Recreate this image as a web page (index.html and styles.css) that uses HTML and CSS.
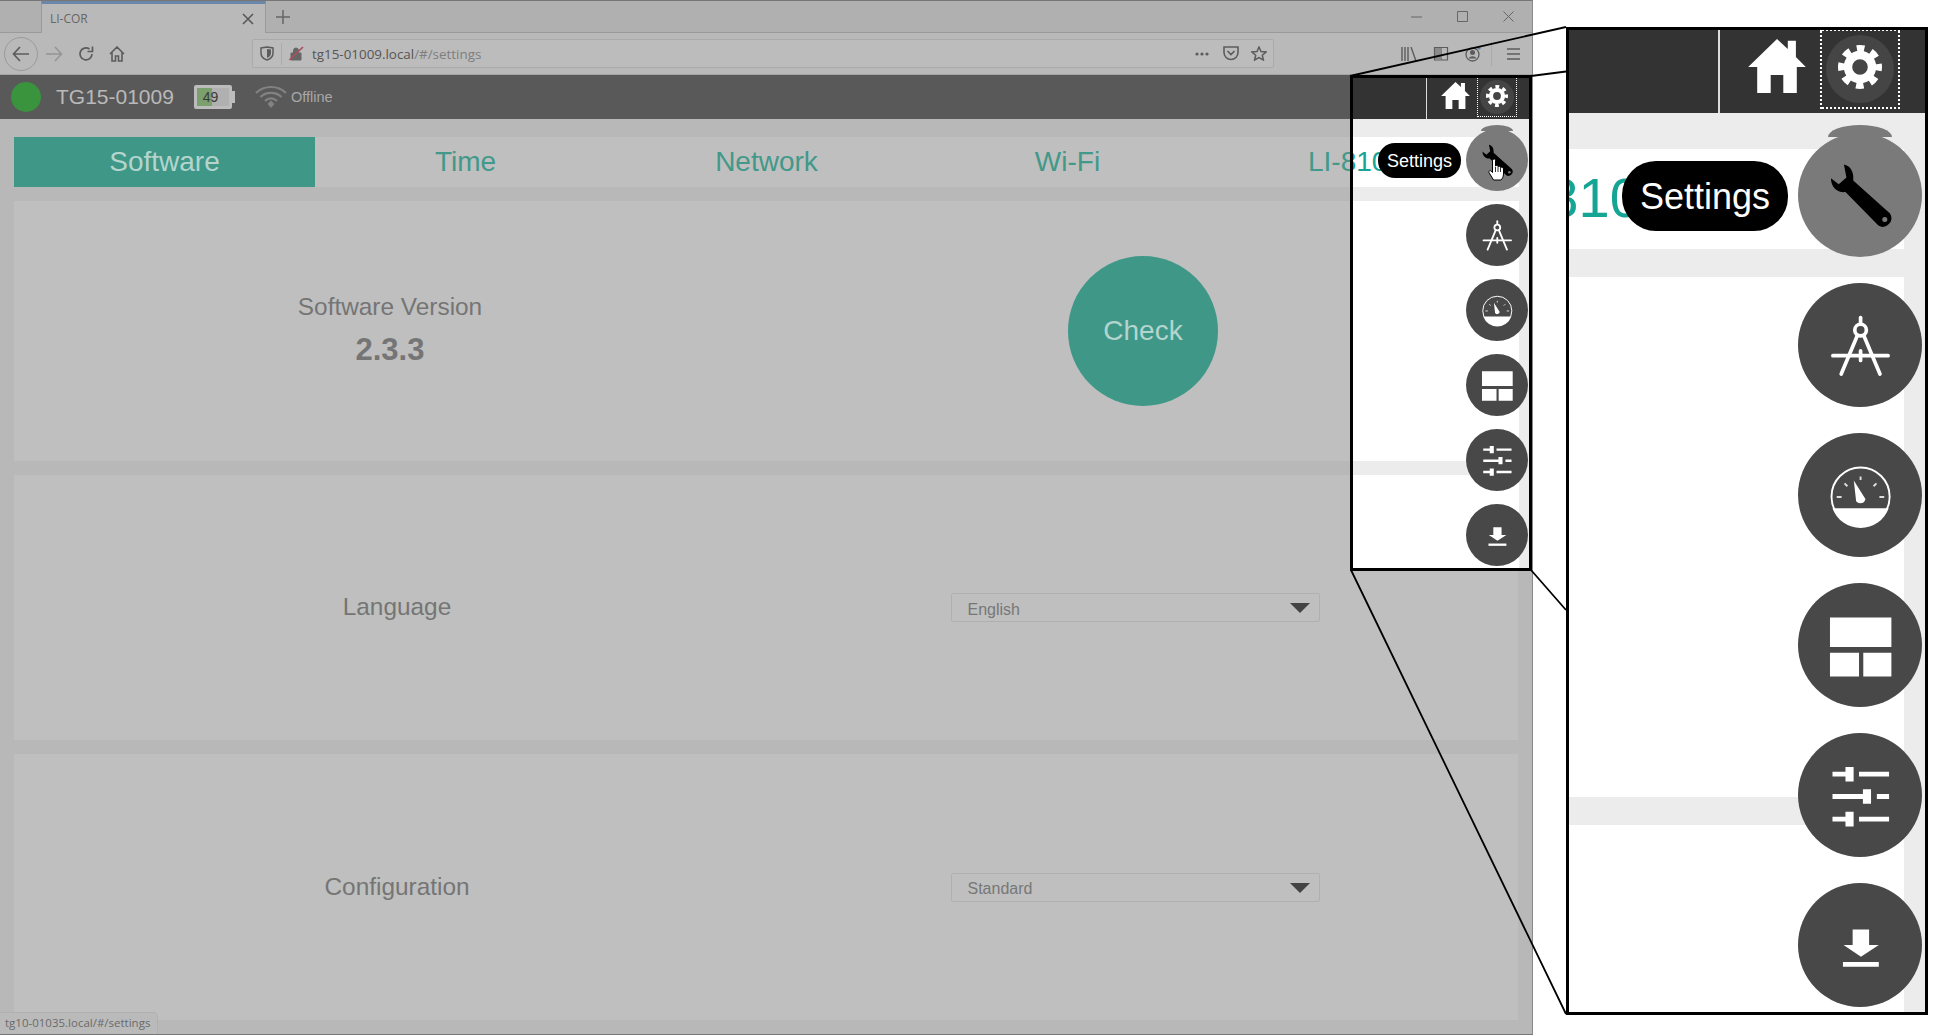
FILE: index.html
```html
<!DOCTYPE html>
<html lang="en">
<head>
  <meta charset="UTF-8" />
  <title>LI-COR</title>
  <link rel="stylesheet" href="styles.css">
</head>
<body>
  <svg class="sprite" width="0" height="0">
    <symbol id="i-home" viewBox="0 0 32 30">
      <path d="M16 0 L22 5.500 V1 H26.500 V10 L32 15.500 H27 V30 H19.500 V20 H12.500 V30 H5 V15.500 H0 Z" fill="currentColor"/>
    </symbol>
    <symbol id="i-gear" viewBox="0 0 24 24">
      <circle cx="12" cy="12" r="6" fill="none" stroke="currentColor" stroke-width="4.200"/>
      <circle cx="12" cy="12" r="9.300" fill="none" stroke="currentColor" stroke-width="3.400" stroke-dasharray="3.800 3.505" stroke-dashoffset="1.900"/>
    </symbol>
    <symbol id="i-wrench" viewBox="0 0 64 64">
      <path d="M23.700 16.300 C27 17 29 20 28.500 24.500 L47.500 41.500 A4.500 4.500 0 0 1 41.500 47.800 L24.500 30.500 C20.500 31 17 28 17 23.300 L21 26.500 L25 23 Z" fill="#000"/>
      <circle cx="44.800" cy="44.600" r="1.300" fill="#7a7a7a"/>
    </symbol>
    <symbol id="i-compass" viewBox="0 0 64 64">
      <g fill="none" stroke="#fff" stroke-width="1.900" stroke-linecap="round">
        <path d="M32.300 17.800 V20.500"/>
        <circle cx="32.300" cy="24.300" r="3"/>
        <path d="M30.700 27 L22.300 47 M33.900 27 L42.300 47"/>
        <path d="M18 37.500 H46.500 M32.300 35 V40"/>
      </g>
    </symbol>
    <symbol id="i-gauge" viewBox="0 0 64 64">
      <circle cx="32.300" cy="32.800" r="15" fill="none" stroke="#fff" stroke-width="1"/>
      <path d="M17.800 38.800 H46.800 A15.400 15.400 0 0 1 17.800 38.800 Z" fill="#fff"/>
      <path d="M28.800 24.500 L34.800 34 A2.700 2.700 0 0 1 30 35.200 Z" fill="#fff"/>
      <path d="M20 33 H22.500 M24 26 L25.500 27.500 M32.300 22.500 V24.300 M40.500 26 L39 27.500 M44.500 33 H42" stroke="#ddd" stroke-width="1" fill="none"/>
    </symbol>
    <symbol id="i-layout" viewBox="0 0 64 64">
      <path d="M16.500 17.800 H48.200 V33 H16.500 Z M16.500 36 H31.500 V48.200 H16.500 Z M33.700 36 H48.200 V48.200 H33.700 Z" fill="#fff"/>
    </symbol>
    <symbol id="i-sliders" viewBox="0 0 64 64">
      <path d="M17.800 20 H24.500 V17.500 H28.700 V25 H24.500 V22.500 H17.800 Z M31.500 20 H47 V22.500 H31.500 Z" fill="#fff"/>
      <path d="M17.800 31.500 H33.500 V29 H37.700 V36.500 H33.500 V34 H17.800 Z M40.700 31.500 H47 V34 H40.700 Z" fill="#fff"/>
      <path d="M17.800 43.200 H24.500 V40.700 H28.700 V48.200 H24.500 V45.700 H17.800 Z M31.500 43.200 H47 V45.700 H31.500 Z" fill="#fff"/>
    </symbol>
    <symbol id="i-download" viewBox="0 0 64 64">
      <path d="M28.200 24 H36.700 V32 H41.700 L32.500 38 L23.500 32 H28.200 Z" fill="#fff"/>
      <path d="M23.200 40.800 H41.700 V43.200 H23.200 Z" fill="#fff"/>
    </symbol>
  </svg>

  <div class="browser">
    <div class="tabstrip">
      <div class="tab">
        <span class="tab-title">LI-COR</span>
        <svg class="tab-close" width="12" height="12" viewBox="0 0 12 12"><path d="M1 1 L11 11 M11 1 L1 11" stroke="#555" stroke-width="1.500"/></svg>
      </div>
      <svg class="tab-new" width="14" height="14" viewBox="0 0 14 14"><path d="M7 0 V14 M0 7 H14" stroke="#666" stroke-width="1.500"/></svg>
      <div class="winctl">
        <svg width="12" height="12" viewBox="0 0 12 12"><path d="M0 6 H11" stroke="#666" stroke-width="1"/></svg>
        <svg width="12" height="12" viewBox="0 0 12 12"><path d="M.5 .5 H10.500 V10.500 H.5 Z" stroke="#666" fill="none"/></svg>
        <svg width="12" height="12" viewBox="0 0 12 12"><path d="M.5 .5 L10.500 10.500 M10.500 .5 L.5 10.500" stroke="#666"/></svg>
      </div>
    </div>

    <div class="toolbar">
      <span class="nav-back">
        <svg width="18" height="16" viewBox="0 0 18 16"><path d="M8 1 L1.500 8 L8 15 M2 8 H17" stroke="#5c5c5c" stroke-width="1.700" fill="none"/></svg>
      </span>
      <svg class="nav-icon" width="18" height="16" viewBox="0 0 18 16"><path d="M10 1 L16.500 8 L10 15 M16 8 H1" stroke="#949494" stroke-width="1.500" fill="none"/></svg>
      <svg class="nav-icon" width="16" height="16" viewBox="0 0 16 16"><path d="M14 8 A6 6 0 1 1 11.500 3 M14.500 .5 V5.500 H9.500" stroke="#5c5c5c" stroke-width="1.700" fill="none"/></svg>
      <svg class="nav-icon" width="16" height="16" viewBox="0 0 16 16"><path d="M1 8 L8 1 L15 8 M3 6.500 V15 H6.500 V10 H9.500 V15 H13 V6.500" stroke="#5c5c5c" stroke-width="1.600" fill="none"/></svg>

      <div class="urlbar">
        <svg width="14" height="15" viewBox="0 0 14 15"><path d="M1 2 L7 1 L13 2 V7 C13 11 10 13 7 14 C4 13 1 11 1 7 Z" stroke="#5c5c5c" stroke-width="1.500" fill="none"/><path d="M7 3 V12 C9 11 11 10 11 6.500 V3.500 Z" fill="#5c5c5c"/></svg>
        <span class="url-sep"></span>
        <svg width="15" height="15" viewBox="0 0 15 15"><path d="M2 7 H12 V14 H2 Z M4.500 7 V4.500 A2.500 2.500 0 0 1 9.500 4.500 V7" fill="#666" stroke="#666"/><path d="M.5 14 L14 1" stroke="#a85060" stroke-width="1.700"/></svg>
        <span class="url-text">tg15-01009.local<span class="url-path">/#/settings</span></span>
        <svg class="url-dots" width="14" height="4" viewBox="0 0 14 4"><circle cx="2" cy="2" r="1.600" fill="#5c5c5c"/><circle cx="7" cy="2" r="1.600" fill="#5c5c5c"/><circle cx="12" cy="2" r="1.600" fill="#5c5c5c"/></svg>
        <svg class="url-pocket" width="16" height="15" viewBox="0 0 16 15"><path d="M1 1 H15 V6.500 A7 7 0 0 1 1 6.500 Z M4.500 5 L8 8.500 L11.500 5" stroke="#5c5c5c" stroke-width="1.600" fill="none"/></svg>
        <svg width="16" height="15" viewBox="0 0 16 15"><path d="M8 1 L10 5.500 L15 6 L11.300 9.200 L12.400 14 L8 11.500 L3.600 14 L4.700 9.200 L1 6 L6 5.500 Z" stroke="#5c5c5c" stroke-width="1.500" fill="none"/></svg>
      </div>

      <div class="tools">
        <svg width="16" height="14" viewBox="0 0 16 14"><path d="M1 0 V14 M4 0 V14 M7 0 V14 M10 0 L15 14" stroke="#5c5c5c" stroke-width="1.400"/></svg>
        <svg width="16" height="14" viewBox="0 0 16 14"><path d="M1.500 .5 H14.500 V13 H1.500 Z M8 .5 V13" stroke="#5c5c5c" stroke-width="1.200" fill="none"/><path d="M2 1 H8 V13 H2 Z" fill="#8a8a8a"/></svg>
        <svg width="16" height="16" viewBox="0 0 16 16"><circle cx="7.500" cy="8.500" r="6.500" stroke="#5c5c5c" stroke-width="1.300" fill="none"/><circle cx="7.500" cy="6.500" r="2.500" fill="#5c5c5c"/><path d="M3.500 12.500 C5 9.500 10 9.500 11.500 12.500" fill="#5c5c5c"/><circle cx="14" cy="2" r="1.700" fill="#5f84a8"/></svg>
        <span class="tools-sep"></span>
        <svg width="13" height="12" viewBox="0 0 13 12"><path d="M0 1 H13 M0 6 H13 M0 11 H13" stroke="#5c5c5c" stroke-width="1.500"/></svg>
      </div>
    </div>

    <header class="app-header">
      <span class="status-dot"></span>
      <span class="device-name">TG15-01009</span>
      <span class="battery"><span class="battery-fill"></span><span class="battery-num">49</span></span>
      <svg class="wifi" width="32" height="24" viewBox="0 0 32 24"><path d="M1 8 C9 0 23 0 31 8 M5.500 12 C11 6.500 21 6.500 26.500 12 M10 16 C13.500 12.500 18.500 12.500 22 16" stroke="#828282" stroke-width="2.200" fill="none"/><path d="M12.500 19 L16 15.500 L19.500 19 L16 23 Z" fill="#828282"/></svg>
      <span class="offline">Offline</span>
    </header>

    <main class="settings">
      <nav class="tabs">
        <a class="tabs-item is-active">Software</a>
        <a class="tabs-item">Time</a>
        <a class="tabs-item">Network</a>
        <a class="tabs-item">Wi-Fi</a>
        <a class="tabs-item tabs-item-last">LI-810</a>
      </nav>

      <section class="card card-version">
        <div class="card-left card-left-version">
          <div class="card-label">Software Version</div>
          <div class="version">2.3.3</div>
        </div>
        <div class="card-right card-right-version">
          <button class="check-btn">Check</button>
        </div>
      </section>

      <section class="card card-language">
        <div class="card-left"><div class="card-label">Language</div></div>
        <div class="card-right">
          <div class="picker"><span>English</span><i class="picker-arrow"></i></div>
        </div>
      </section>

      <section class="card card-config">
        <div class="card-left card-left-config"><div class="card-label">Configuration</div></div>
        <div class="card-right">
          <div class="picker"><span>Standard</span><i class="picker-arrow"></i></div>
        </div>
      </section>
    </main>

    <div class="statusbar">tg10-01035.local/#/settings</div>
  </div>

  <!-- callout lines from the small frame to the enlarged one -->
  <svg class="connectors" width="1937" height="1035" viewBox="0 0 1937 1035">
    <path d="M1350 76 L1566 27 M1531 76 L1566 71.500 M1351 570 L1566 1014 M1531 570 L1566 610" stroke="#000" stroke-width="1.800" fill="none"/>
  </svg>

  <div class="lens lens-small">
    <div class="lens-view">
      <div class="lens-header">
        <span class="lens-brand"></span>
        <svg class="lens-home"><use href="#i-home"/></svg>
        <span class="lens-gear"><span class="lens-gear-disc"><svg><use href="#i-gear"/></svg></span></span>
      </div>
      <div class="lens-body">
        <div class="lens-tabs"><span>LI-810</span></div>
        <div class="lens-card lens-card-a"></div>
        <div class="lens-card lens-card-b"></div>
      </div>
      <span class="lens-tip">Settings</span>
      <div class="fabs">
        <span class="fab fab-hover"><svg><use href="#i-wrench"/></svg></span>
        <span class="fab"><svg><use href="#i-compass"/></svg></span>
        <span class="fab"><svg><use href="#i-gauge"/></svg></span>
        <span class="fab"><svg><use href="#i-layout"/></svg></span>
        <span class="fab"><svg><use href="#i-sliders"/></svg></span>
        <span class="fab"><svg><use href="#i-download"/></svg></span>
      </div>
      <svg class="hand" width="17" height="23" viewBox="0 0 17 23">
        <path d="M5 1.500 C6 .5 7.500 1 7.500 2.500 V8 C8.500 7 10 7.500 10 8.500 C11 8 12.500 8.500 12.500 9.500 C13.500 9 15.500 9.500 15.500 11 V16 C15.500 19 14 21 13 22 H5.500 L1 14.500 C.5 13 2 12 3.200 13 L4.500 14.500 V2.500 Z" fill="#fff" stroke="#000" stroke-width="1"/>
        <path d="M7.500 9 V14 M10 9 V14 M12.500 10 V14" stroke="#000" stroke-width=".8"/>
      </svg>
    </div>
  </div>

  <div class="lens lens-big">
    <div class="lens-view">
      <div class="lens-header">
        <span class="lens-brand"></span>
        <svg class="lens-home"><use href="#i-home"/></svg>
        <span class="lens-gear"><span class="lens-gear-disc"><svg><use href="#i-gear"/></svg></span></span>
      </div>
      <div class="lens-body">
        <div class="lens-tabs"><span>LI-810</span></div>
        <div class="lens-card lens-card-a"></div>
        <div class="lens-card lens-card-b"></div>
      </div>
      <span class="lens-tip">Settings</span>
      <div class="fabs">
        <span class="fab fab-hover"><svg><use href="#i-wrench"/></svg></span>
        <span class="fab"><svg><use href="#i-compass"/></svg></span>
        <span class="fab"><svg><use href="#i-gauge"/></svg></span>
        <span class="fab"><svg><use href="#i-layout"/></svg></span>
        <span class="fab"><svg><use href="#i-sliders"/></svg></span>
        <span class="fab"><svg><use href="#i-download"/></svg></span>
      </div>
    </div>
  </div>
</body>
</html>
```

FILE: styles.css
```css
html, body {
  margin: 0;
  height: 100%;
}

body {
  position: relative;
  width: 1937px;
  height: 1035px;
  overflow: hidden;
  background: #fff;
  font-family: 'Liberation Sans', Arial, sans-serif;
}

.sprite {
  position: absolute;
}

/* browser window, dimmed */
.browser {
  position: relative;
  box-sizing: border-box;
  width: 1533px;
  height: 1035px;
  display: flex;
  flex-direction: column;
  border-top: 1px solid #777;
  border-right: 1px solid #8a8a8a;
  border-bottom: 1px solid #777;
  background: #b8b8b8;
}

.tabstrip {
  flex: none;
  height: 32px;
  display: flex;
  align-items: center;
  background: #b0b0b0;
  border-bottom: 1px solid #9a9a9a;
  box-sizing: border-box;
}

.tab {
  box-sizing: border-box;
  width: 225px;
  height: 32px;
  margin-left: 41px;
  padding: 0 11px 0 8px;
  display: flex;
  align-items: center;
  justify-content: space-between;
  background: #b9b9b9;
  border-top: 3px solid #6b86a8;
  border-left: 1px solid #9a9a9a;
  border-right: 1px solid #9a9a9a;
  align-self: flex-start;
}

.tab-title {
  font: 12px 'Open Sans', sans-serif;
  color: #666;
}

.tab-new {
  margin-left: 10px;
}

.winctl {
  margin-left: auto;
  margin-right: 17px;
  display: flex;
  gap: 34px;
}

.toolbar {
  flex: none;
  height: 41px;
  display: flex;
  align-items: center;
  background: #b9b9b9;
  border-bottom: 1px solid #a4a4a4;
  padding-left: 4px;
}

.nav-back {
  box-sizing: border-box;
  width: 34px;
  height: 34px;
  display: flex;
  align-items: center;
  justify-content: center;
  border: 1px solid #9a9a9a;
  border-radius: 50%;
  margin-right: 7px;
}

.nav-icon {
  margin-right: 15px;
}

.urlbar {
  box-sizing: border-box;
  width: 1022px;
  height: 29px;
  margin-left: 112px;
  padding: 0 6px 0 7px;
  display: flex;
  align-items: center;
  gap: 7px;
  background: #bcbcbc;
  border: 1px solid #aaa;
  border-radius: 2px;
}

.url-sep {
  width: 1px;
  height: 22px;
  background: #aaa;
}

.url-text {
  flex: 1;
  margin-left: 1px;
  font: 13.400px 'Open Sans', sans-serif;
  color: #555;
  white-space: nowrap;
}

.url-path {
  color: #7e7e7e;
}

.url-dots {
  margin-right: 7px;
}

.url-pocket {
  margin-right: 5px;
}

.tools {
  margin-left: auto;
  margin-right: 12px;
  display: flex;
  align-items: center;
  gap: 16px;
}

.tools-sep {
  width: 1px;
  height: 24px;
  margin: 0 -1px 0 -6px;
  background: #aaa;
}

.app-header {
  flex: none;
  height: 44px;
  display: flex;
  align-items: center;
  background: #595959;
  padding-left: 11px;
}

.status-dot {
  width: 30px;
  height: 30px;
  border-radius: 50%;
  background: #3a943e;
}

.device-name {
  margin-left: 15px;
  font-size: 21px;
  color: #b9b9b9;
}

.battery {
  position: relative;
  box-sizing: border-box;
  margin-left: 20px;
  width: 38px;
  height: 24px;
  border: 3px solid #bcbcbc;
  border-radius: 2px;
  background: #b0b0b0;
  display: flex;
  align-items: center;
  justify-content: center;
}

.battery::after {
  content: "";
  position: absolute;
  right: -6px;
  top: 3px;
  width: 3px;
  height: 12px;
  background: #bcbcbc;
}

.battery-fill {
  position: absolute;
  left: 0;
  top: 0;
  bottom: 0;
  width: 15px;
  background: #7c9f6e;
}

.battery-num {
  position: relative;
  margin-right: 5px;
  font-size: 14px;
  color: #3a3a3a;
}

.wifi {
  margin-left: 23px;
}

.offline {
  margin-left: 4px;
  font-size: 14.500px;
  color: #a8a8a8;
}

.settings {
  flex: 1;
  display: flex;
  flex-direction: column;
  gap: 14px;
  padding: 18px 14px 0;
  background: #b8b8b8;
}

.tabs {
  flex: none;
  height: 50px;
  display: flex;
  background: #bfbfbf;
}

.tabs-item {
  box-sizing: border-box;
  flex: 0 0 301px;
  line-height: 50px;
  text-align: center;
  font-size: 28px;
  color: #42998a;
}

.tabs-item.is-active {
  background: #3f9887;
  color: #b4d4ce;
}

.tabs-item-last {
  text-align: left;
  padding-left: 90px;
}

.card {
  flex: none;
  display: flex;
  align-items: center;
  background: #bfbfbf;
}

.card-version {
  height: 260px;
}

.card-language {
  height: 265px;
}

.card-config {
  height: 266px;
}

.card-left,
.card-right {
  flex: 1;
  text-align: center;
}

.card-left {
  padding: 0 0 2px 14px;
}

.card-right {
  padding-right: 14px;
  display: flex;
  justify-content: center;
}

.card-left-version {
  padding: 0 0 5px 1px;
}

.card-left-config {
  padding-bottom: 0;
}

.card-right-version {
  padding: 0 0 0 3px;
}

.card-label {
  font-size: 24.400px;
  line-height: 30px;
  color: #757575;
}

.version {
  margin-top: 12px;
  font-size: 31px;
  line-height: 32px;
  font-weight: bold;
  color: #757575;
}

.check-btn {
  width: 150px;
  height: 150px;
  padding: 0;
  border: none;
  border-radius: 50%;
  background: #3f9887;
  color: #b4d4ce;
  font: 28px 'Liberation Sans', Arial, sans-serif;
}

.picker {
  box-sizing: border-box;
  width: 369px;
  height: 29px;
  padding: 4px 9px 0 16px;
  display: flex;
  align-items: center;
  justify-content: space-between;
  border: 1px solid #b0b0b0;
  border-radius: 2px;
  font-size: 16px;
  color: #777;
}

.picker-arrow {
  width: 0;
  height: 0;
  margin-top: -3px;
  border-left: 10px solid transparent;
  border-right: 10px solid transparent;
  border-top: 10px solid #444;
}

.statusbar {
  position: absolute;
  left: 0;
  bottom: 0;
  box-sizing: border-box;
  width: 158px;
  height: 22px;
  padding-left: 5px;
  font: 11.500px/20px 'Open Sans', sans-serif;
  color: #6a6a6a;
  background: #bababa;
  border-top: 1px solid #b0b0b0;
  border-right: 1px solid #b0b0b0;
  border-top-right-radius: 5px;
}

/* callouts */
.connectors {
  position: absolute;
  left: 0;
  top: 0;
}

.lens {
  position: absolute;
  box-sizing: border-box;
  overflow: hidden;
  background: #fff;
}

.lens::after {
  content: "";
  position: absolute;
  inset: 0;
  border: 3px solid #000;
  pointer-events: none;
}

.lens-small {
  left: 1350px;
  top: 75px;
  width: 182px;
  height: 496px;
}

.lens-big {
  left: 1566px;
  top: 27px;
  width: 362px;
  height: 988px;
}

.lens-view {
  position: relative;
  width: 182px;
  height: 496px;
}

.lens-big .lens-view {
  margin-top: -2px;
  transform: scale(2);
  transform-origin: 0 0;
}

.lens-header {
  height: 44px;
  display: flex;
  align-items: center;
  padding-right: 15px;
  background: #333;
}

.lens-brand {
  box-sizing: border-box;
  width: 77px;
  height: 44px;
  border-right: 1px solid #ddd;
}

.lens-home {
  width: 29px;
  height: 27px;
  margin: -4px 7px 0 auto;
  color: #fff;
}

.lens-gear {
  box-sizing: border-box;
  width: 40px;
  height: 40px;
  display: flex;
  align-items: center;
  justify-content: center;
  border: 1px dotted #fff;
}

.lens-gear-disc {
  width: 34px;
  height: 34px;
  border-radius: 50%;
  background: #454545;
  display: flex;
  align-items: center;
  justify-content: center;
  color: #fff;
}

.lens-gear-disc svg {
  width: 24px;
  height: 24px;
  margin-top: -2px;
}

.lens-body {
  height: 452px;
  padding: 18px 13px 0 0;
  box-sizing: border-box;
  background: #ececec;
  display: flex;
  flex-direction: column;
  gap: 14px;
}

.lens-tabs {
  flex: none;
  height: 50px;
  overflow: hidden;
  background: #fff;
}

.lens-tabs span {
  display: block;
  margin-left: -42px;
  font-size: 28px;
  line-height: 50px;
  color: #14a594;
  white-space: nowrap;
}

.lens-card {
  background: #fff;
  flex: none;
}

.lens-card-a {
  height: 260px;
}

.lens-card-b {
  flex: 1;
}

.lens-tip {
  position: absolute;
  left: 28px;
  top: 68px;
  box-sizing: border-box;
  width: 83px;
  height: 35px;
  padding-top: 1px;
  border-radius: 17px;
  background: #000;
  color: #fff;
  font-size: 18px;
  line-height: 35px;
  text-align: center;
}

.fabs {
  position: absolute;
  right: 4px;
  top: 54px;
  display: flex;
  flex-direction: column;
  gap: 13px;
}

.fab {
  position: relative;
  display: block;
  width: 62px;
  height: 62px;
  border-radius: 50%;
  background: #484848;
}

.fab svg {
  position: relative;
  display: block;
  width: 62px;
  height: 62px;
}

.fab-hover {
  background: #7a7a7a;
}

.fab-hover::before {
  content: "";
  position: absolute;
  left: 15px;
  top: -4px;
  width: 32px;
  height: 6px;
  border-radius: 50% 50% 0 0 / 100% 100% 0 0;
  background: #7a7a7a;
}

.hand {
  position: absolute;
  left: 138px;
  top: 83px;
}
```
